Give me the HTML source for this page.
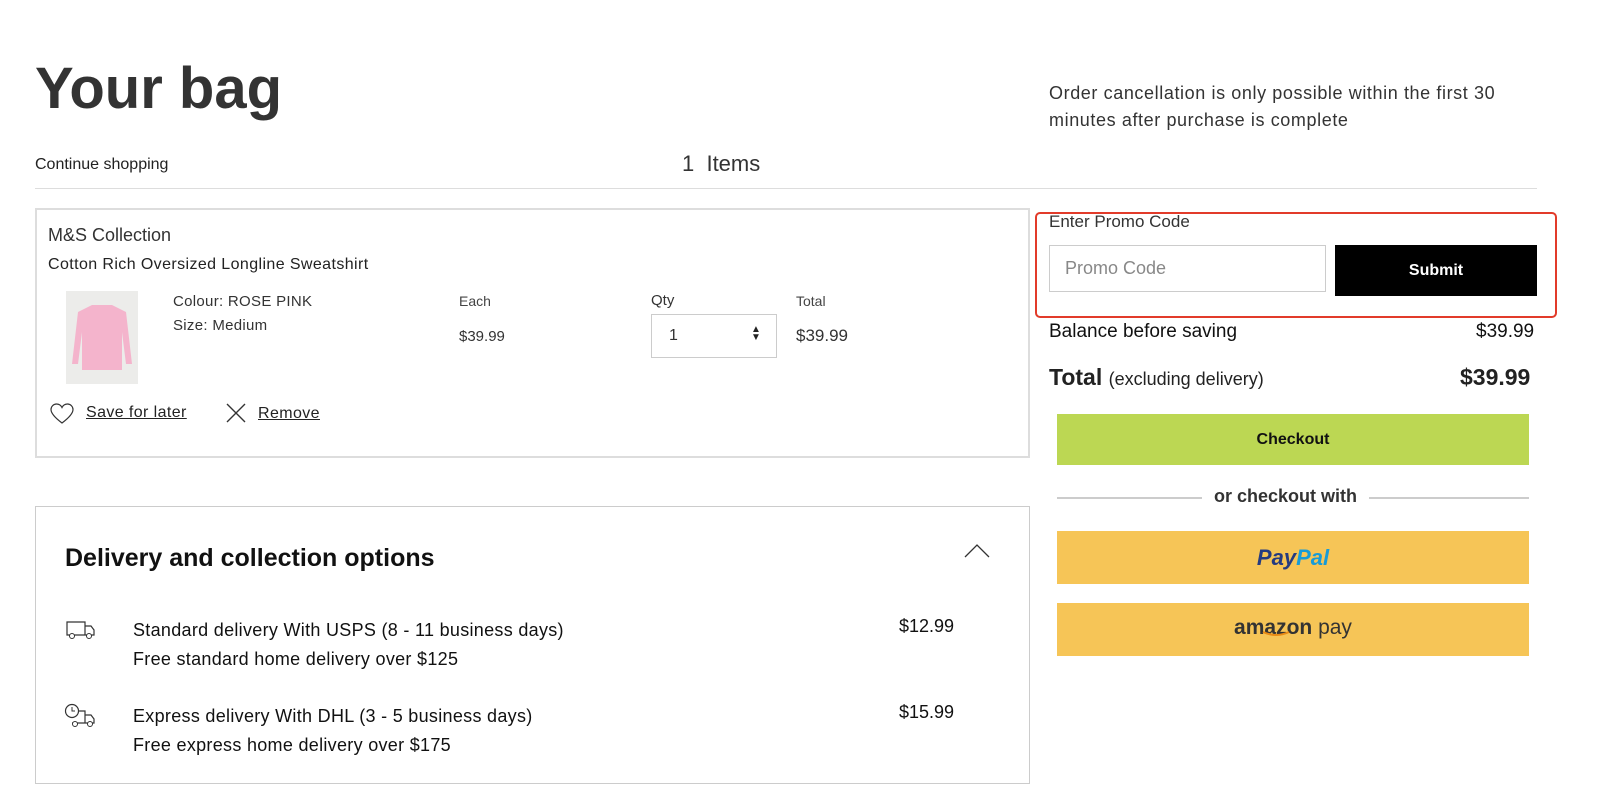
<!DOCTYPE html>
<html><head><meta charset="utf-8"><style>
*{margin:0;padding:0;box-sizing:border-box}
body{width:1600px;height:810px;background:#fff;font-family:"Liberation Sans",sans-serif;color:#222;position:relative;overflow:hidden}
.a{position:absolute;white-space:nowrap}
</style></head><body>
<div class="a" style="left:35px;top:55px;font-size:58px;font-weight:bold;color:#333">Your bag</div>
<div class="a" style="left:1049px;top:80px;font-size:18px;line-height:27px;color:#333;white-space:normal;width:520px;letter-spacing:0.6px">Order cancellation is only possible within the first 30<br>minutes after purchase is complete</div>
<div class="a" style="left:35px;top:156px;font-size:16px">Continue shopping</div>
<div class="a" style="left:682px;top:151px;font-size:22px;color:#333">1&nbsp; Items</div>
<div class="a" style="left:35px;top:188px;width:1502px;height:1px;background:#ddd"></div>

<div class="a" style="left:35px;top:208px;width:995px;height:250px;border:2px solid #ddd"></div>
<div class="a" style="left:48px;top:225px;font-size:18px;color:#333">M&amp;S Collection</div>
<div class="a" style="left:48px;top:256px;font-size:16px;letter-spacing:0.4px">Cotton Rich Oversized Longline Sweatshirt</div>
<div class="a" style="left:66px;top:291px;width:72px;height:93px;background:#ececea"></div>
<svg class="a" style="left:70px;top:302px" width="64" height="72" viewBox="0 0 64 72"><path d="M22 3 L42 3 L56 10 L62 62 L56 62 L52 30 L52 68 L12 68 L12 30 L8 62 L2 62 L8 10 Z" fill="#f4b4cc"/></svg>
<div class="a" style="left:173px;top:293px;font-size:15px;color:#333;letter-spacing:0.3px">Colour: ROSE PINK</div>
<div class="a" style="left:173px;top:317px;font-size:15px;color:#333;letter-spacing:0.3px">Size: Medium</div>
<div class="a" style="left:459px;top:293px;font-size:14px;color:#444">Each</div>
<div class="a" style="left:459px;top:328px;font-size:15px;color:#333">$39.99</div>
<div class="a" style="left:651px;top:292px;font-size:15px;color:#333">Qty</div>
<div class="a" style="left:651px;top:314px;width:126px;height:44px;border:1px solid #ccc"></div>
<div class="a" style="left:669px;top:327px;font-size:16px;color:#333">1</div>
<div class="a" style="left:751px;top:326px;font-size:10px;line-height:8px;color:#222">▲<br>▼</div>
<div class="a" style="left:796px;top:293px;font-size:14px;color:#444">Total</div>
<div class="a" style="left:796px;top:326px;font-size:17px;color:#333">$39.99</div>
<svg class="a" style="left:50px;top:403px" width="24" height="22" viewBox="0 0 24 22"><path d="M12 20 C4 14 1 10 1 6.5 C1 3.5 3.5 1 6.5 1 C9 1 11 2.5 12 4.5 C13 2.5 15 1 17.5 1 C20.5 1 23 3.5 23 6.5 C23 10 20 14 12 20Z" fill="none" stroke="#333" stroke-width="1.2"/></svg>
<div class="a" style="left:86px;top:404px;font-size:16px;text-decoration:underline;letter-spacing:0.4px">Save for later</div>
<svg class="a" style="left:226px;top:403px" width="20" height="20"><path d="M1 1L19 19M19 1L1 19" stroke="#333" stroke-width="1.4"/></svg>
<div class="a" style="left:258px;top:405px;font-size:16px;text-decoration:underline;letter-spacing:0.4px">Remove</div>

<div class="a" style="left:35px;top:506px;width:995px;height:278px;border:1px solid #ccc"></div>
<div class="a" style="left:65px;top:544px;font-size:25px;font-weight:bold;color:#111">Delivery and collection options</div>
<svg class="a" style="left:964px;top:543px" width="26" height="16"><path d="M1 14L13 2L25 14" fill="none" stroke="#333" stroke-width="1.3"/></svg>
<svg class="a" style="left:66px;top:620px" width="30" height="20" viewBox="0 0 30 20"><path d="M1 2H19V15H1Z M19 6H25L28 10V15H19" fill="none" stroke="#333" stroke-width="1.2"/><circle cx="6" cy="16" r="2.5" fill="#fff" stroke="#333"/><circle cx="23" cy="16" r="2.5" fill="#fff" stroke="#333"/></svg>
<svg class="a" style="left:64px;top:703px" width="32" height="26" viewBox="0 0 32 26"><path d="M8 8H21V20H8 M21 12H27L30 16V20H21" fill="none" stroke="#333" stroke-width="1.2"/><circle cx="8" cy="8" r="6.5" fill="#fff" stroke="#333" stroke-width="1.2"/><path d="M8 4V8H11" fill="none" stroke="#333"/><circle cx="11" cy="21" r="2.5" fill="#fff" stroke="#333"/><circle cx="26" cy="21" r="2.5" fill="#fff" stroke="#333"/></svg>
<div class="a" style="left:133px;top:616px;font-size:18px;line-height:29px;color:#111;letter-spacing:0.3px">Standard delivery With USPS (8 - 11 business days)<br>Free standard home delivery over $125</div>
<div class="a" style="left:899px;top:616px;font-size:18px;color:#111">$12.99</div>
<div class="a" style="left:133px;top:702px;font-size:18px;line-height:29px;color:#111;letter-spacing:0.3px">Express delivery With DHL (3 - 5 business days)<br>Free express home delivery over $175</div>
<div class="a" style="left:899px;top:702px;font-size:18px;color:#111">$15.99</div>

<div class="a" style="left:1035px;top:212px;width:522px;height:106px;border:2px solid #e23b2a;border-radius:5px"></div>
<div class="a" style="left:1049px;top:212px;font-size:17px;color:#333">Enter Promo Code</div>
<div class="a" style="left:1049px;top:245px;width:277px;height:47px;border:1px solid #ccc"></div>
<div class="a" style="left:1065px;top:258px;font-size:18px;color:#888">Promo Code</div>
<div class="a" style="left:1335px;top:245px;width:202px;height:51px;background:#000;color:#fff;font-size:16px;font-weight:bold;text-align:center;line-height:51px">Submit</div>
<div class="a" style="left:1049px;top:321px;font-size:19px;color:#111">Balance before saving</div>
<div class="a" style="left:1476px;top:321px;font-size:19px;color:#111">$39.99</div>
<div class="a" style="left:1049px;top:364px;font-size:23px;color:#222"><b>Total</b> <span style="font-size:18px">(excluding delivery)</span></div>
<div class="a" style="left:1460px;top:364px;font-size:23px;font-weight:bold;color:#222">$39.99</div>
<div class="a" style="left:1057px;top:414px;width:472px;height:51px;background:#bcd753;font-size:16px;font-weight:bold;text-align:center;line-height:51px;color:#111">Checkout</div>
<div class="a" style="left:1057px;top:497px;width:472px;height:2px;background:#ccc"></div>
<div class="a" style="left:1202px;top:486px;padding:0 12px;background:#fff;font-size:18px;font-weight:bold;color:#333">or checkout with</div>
<div class="a" style="left:1057px;top:531px;width:472px;height:53px;background:#f6c557;text-align:center;line-height:53px;font-size:22px;font-weight:bold;font-style:italic"><span style="color:#253b80">Pay</span><span style="color:#179bd7">Pal</span></div>
<div class="a" style="left:1057px;top:603px;width:472px;height:53px;background:#f6c557;text-align:center;line-height:50px;font-size:21px;color:#333"><b>amazon</b> pay</div>
<svg class="a" style="left:1262px;top:630px" width="30" height="8"><path d="M1 2Q14 8 27 2" fill="none" stroke="#e88a14" stroke-width="2"/></svg>
</body></html>
